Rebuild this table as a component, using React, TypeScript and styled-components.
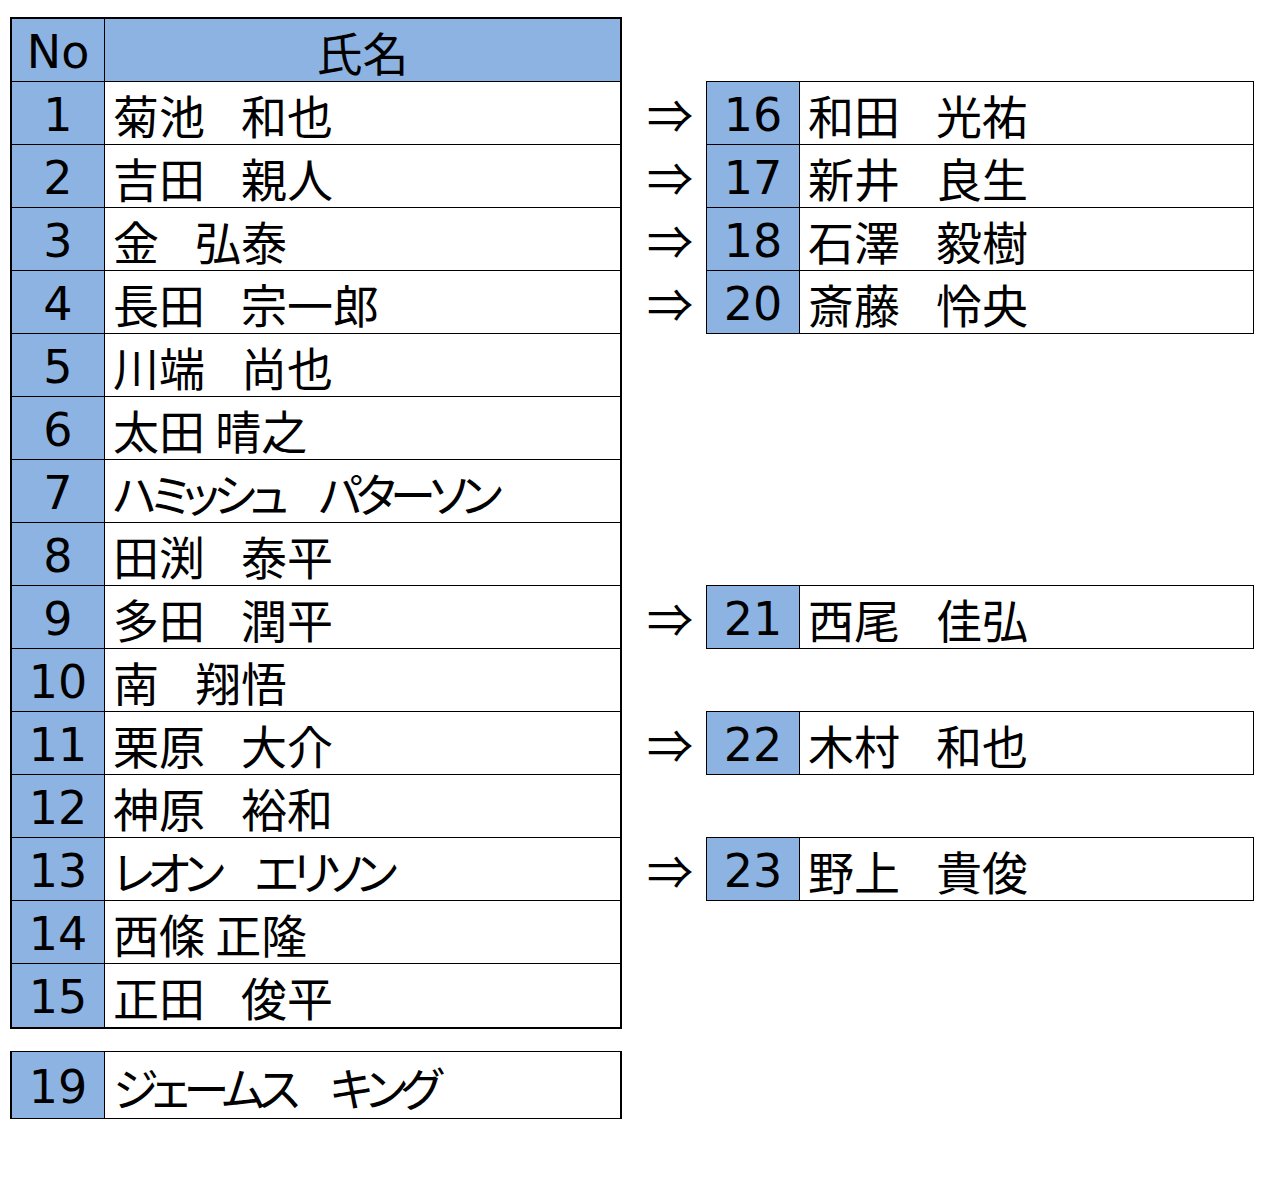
import React from "react";
import styled, { createGlobalStyle } from "styled-components";

interface IPerson {
  no: number;
  name: string;
  kana?: boolean;
}

interface IMove {
  from: number;
  to: IPerson;
}

const BLUE = "#8db3e2";

const people: IPerson[] = [
  { no: 1, name: "菊池　和也" },
  { no: 2, name: "吉田　親人" },
  { no: 3, name: "金　弘泰" },
  { no: 4, name: "長田　宗一郎" },
  { no: 5, name: "川端　尚也" },
  { no: 6, name: "太田 晴之" },
  { no: 7, name: "ハミッシュ　パターソン", kana: true },
  { no: 8, name: "田渕　泰平" },
  { no: 9, name: "多田　潤平" },
  { no: 10, name: "南　翔悟" },
  { no: 11, name: "栗原　大介" },
  { no: 12, name: "神原　裕和" },
  { no: 13, name: "レオン　エリソン", kana: true },
  { no: 14, name: "西條 正隆" },
  { no: 15, name: "正田　俊平" },
];

const moves: IMove[] = [
  { from: 1, to: { no: 16, name: "和田　光祐" } },
  { from: 2, to: { no: 17, name: "新井　良生" } },
  { from: 3, to: { no: 18, name: "石澤　毅樹" } },
  { from: 4, to: { no: 20, name: "斎藤　怜央" } },
  { from: 9, to: { no: 21, name: "西尾　佳弘" } },
  { from: 11, to: { no: 22, name: "木村　和也" } },
  { from: 13, to: { no: 23, name: "野上　貴俊" } },
];

const GlobalStyle = createGlobalStyle`
  body {
    margin: 0;
    background: #fff;
    color: #000;
    font-family: "Noto Sans CJK JP", "Noto Sans", sans-serif;
  }
`;

const Page = styled.div`
  display: flex;
  align-items: flex-start;
  padding: 17px 0 0 10px;
`;

const LeftSide = styled.div`
  display: flex;
  flex-direction: column;
  gap: 22px;
  width: 612px;
`;

const Table = styled.div`
  border: 2px solid #000;
`;

const Row = styled.div<{ $last?: boolean }>`
  display: flex;
  height: 63px;
  box-sizing: border-box;
  border-bottom: ${(p) => (p.$last ? "none" : "1px solid #000")};
`;

const NoCell = styled.div`
  width: 93px;
  flex-shrink: 0;
  background: ${BLUE};
  border-right: 1px solid #000;
  display: flex;
  align-items: center;
  justify-content: center;
  font-family: "DejaVu Sans", sans-serif;
  font-size: 46px;
  line-height: 1;
  padding-top: 3px;
  box-sizing: border-box;
`;

const NameCell = styled.div<{ $center?: boolean; $kana?: boolean }>`
  flex: 1;
  display: flex;
  align-items: center;
  justify-content: ${(p) => (p.$center ? "center" : "flex-start")};
  padding-left: ${(p) => (p.$center ? 0 : 8)}px;
  padding-top: 1px;
  font-size: 46px;
  line-height: 1;
  white-space: pre;
  font-feature-settings: "palt";
  letter-spacing: ${(p) => (p.$kana ? "-6px" : "0")};
  background: ${(p) => (p.$center ? BLUE : "#fff")};
`;

const Gap = styled.span`
  letter-spacing: -10px;
`;

const Single = styled.div`
  display: flex;
  height: 68px;
  box-sizing: border-box;
  border: 1px solid #000;
  border-left-width: 2px;
  border-right-width: 2px;
`;

const RightSide = styled.div`
  display: flex;
  flex-direction: column;
  padding-top: 64px;
`;

const Slot = styled.div`
  display: flex;
  align-items: flex-start;
  height: 63px;
`;

const Arrow = styled.div`
  width: 84px;
  height: 63px;
  display: flex;
  align-items: center;
  justify-content: center;
  font-size: 46px;
  line-height: 1;
  padding-left: 12px;
  box-sizing: border-box;
`;

const Box = styled.div`
  display: flex;
  width: 548px;
  height: 64px;
  box-sizing: border-box;
  border: 1px solid #000;
`;

function Name({ text }: { text: string }) {
  const parts = text.split("　");
  return (
    <>
      {parts.map((part, idx) => (
        <React.Fragment key={idx}>
          {idx > 0 && <Gap>　</Gap>}
          {part}
        </React.Fragment>
      ))}
    </>
  );
}

function App() {
  return (
    <>
      <GlobalStyle />
      <Page>
        <LeftSide>
          <Table>
            <Row>
              <NoCell>No</NoCell>
              <NameCell $center>氏名</NameCell>
            </Row>
            {people.map((p, idx) => (
              <Row key={p.no} $last={idx === people.length - 1}>
                <NoCell>{p.no}</NoCell>
                <NameCell $kana={p.kana}>
                  <Name text={p.name} />
                </NameCell>
              </Row>
            ))}
          </Table>
          <Single>
            <NoCell>19</NoCell>
            <NameCell $kana>
              <Name text="ジェームス　キング" />
            </NameCell>
          </Single>
        </LeftSide>
        <RightSide>
          {people.map((p) => {
            const m = moves.find((el) => el.from === p.no);
            return (
              <Slot key={p.no}>
                {m && (
                  <>
                    <Arrow>⇒</Arrow>
                    <Box>
                      <NoCell>{m.to.no}</NoCell>
                      <NameCell>
                        <Name text={m.to.name} />
                      </NameCell>
                    </Box>
                  </>
                )}
              </Slot>
            );
          })}
        </RightSide>
      </Page>
    </>
  );
}

export default App;
